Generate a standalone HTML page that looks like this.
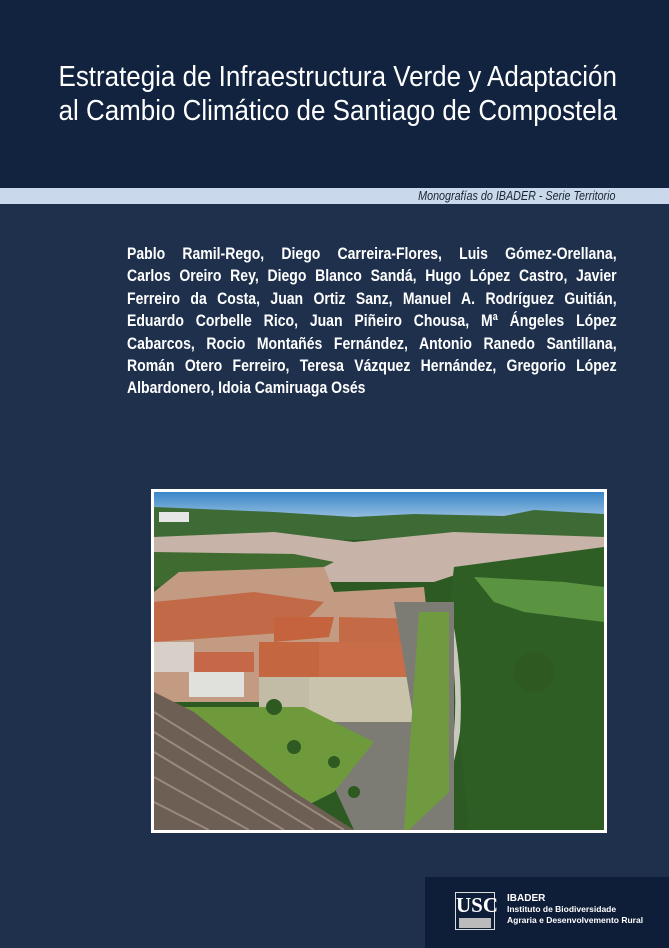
<!DOCTYPE html>
<html><head><meta charset="utf-8"><style>
*{margin:0;padding:0;box-sizing:border-box}
body{width:669px;height:948px;overflow:hidden;background:#1e304c;position:relative;font-family:"Liberation Sans",sans-serif;}
.top{position:absolute;left:0;top:0;width:669px;height:188px;background:#12233f}
.title{position:absolute;right:52px;text-align:right;color:#fff;font-size:29px;line-height:34px;top:60px;white-space:nowrap;transform:scaleX(0.895);transform-origin:right top}
.strip{position:absolute;left:0;top:188px;width:669px;height:16px;background:#c9d8ea}
.strip span{position:absolute;right:54px;top:1px;font-style:italic;font-size:12.5px;color:#1a2436;transform:scaleX(0.86);transform-origin:right top;white-space:nowrap}
.auth{position:absolute;left:127px;top:243px;width:576px;color:#fff;font-size:16.5px;line-height:22.4px;font-weight:bold;transform:scaleX(0.85);transform-origin:left top}
.auth div{text-align:justify;text-align-last:justify;white-space:nowrap}
.auth div.l{text-align-last:left}
.photo{position:absolute;left:151px;top:489px;width:456px;height:344px;background:#fff;padding:3px}
.foot{position:absolute;left:425px;top:877px;width:244px;height:71px;background:#0f1e38}
</style></head><body>
<div class="top"></div>
<div class="title"><div>Estrategia de Infraestructura Verde y Adaptación</div><div>al Cambio Climático de Santiago de Compostela</div></div>
<div class="strip"><span>Monografías do IBADER - Serie Territorio</span></div>
<div class="auth">
<div>Pablo Ramil-Rego, Diego Carreira-Flores, Luis Gómez-Orellana,</div>
<div>Carlos Oreiro Rey, Diego Blanco Sandá, Hugo López Castro, Javier</div>
<div>Ferreiro da Costa, Juan Ortiz Sanz, Manuel A. Rodríguez Guitián,</div>
<div>Eduardo Corbelle Rico, Juan Piñeiro Chousa, Mª Ángeles López</div>
<div>Cabarcos, Rocio Montañés Fernández, Antonio Ranedo Santillana,</div>
<div>Román Otero Ferreiro, Teresa Vázquez Hernández, Gregorio López</div>
<div class="l">Albardonero, Idoia Camiruaga Osés</div>
</div>
<div class="photo">
<svg width="450" height="338" viewBox="0 0 450 338" style="display:block">
<defs><linearGradient id="sk" x1="0" y1="0" x2="0" y2="1"><stop offset="0" stop-color="#3a86c8"/><stop offset="1" stop-color="#9cc3e3"/></linearGradient></defs>
<rect width="450" height="338" fill="#2d5a22"/>
<rect width="450" height="28" fill="url(#sk)"/>
<path d="M0 15 L120 20 L200 25 L260 22 L350 24 L380 18 L450 22 L450 45 L0 50Z" fill="#3e6b35"/>
<rect x="5" y="20" width="30" height="10" fill="#e6e6e6"/>
<path d="M0 45 L120 40 L200 50 L300 40 L450 45 L450 65 L340 70 L280 90 L0 90Z" fill="#c7b3a8"/>
<path d="M0 60 L140 62 L180 70 L160 80 L0 95Z" fill="#3f6a30"/>
<path d="M25 80 L170 75 L180 100 L270 95 L275 140 L260 230 L150 230 L120 210 L0 210 L0 100Z" fill="#c39a82"/>
<path d="M0 110 L100 100 L170 110 L140 140 L0 150Z" fill="#c26a48"/>
<path d="M120 125 L180 125 L175 145 L120 150Z" fill="#c4633e"/>
<path d="M185 125 L265 127 L262 150 L185 150Z" fill="#c46a46"/>
<path d="M150 150 L262 150 L258 190 L150 185Z" fill="#c86d48"/>
<rect x="150" y="185" width="110" height="45" fill="#c9c3ab"/>
<rect x="105" y="150" width="60" height="35" fill="#c4663f"/>
<rect x="105" y="185" width="50" height="45" fill="#c2bba5"/>
<rect x="35" y="160" width="65" height="20" fill="#c46847"/>
<rect x="35" y="180" width="55" height="25" fill="#e0e0dc"/>
<rect x="0" y="150" width="40" height="30" fill="#d8d0c8"/>
<path d="M300 75 L450 55 L450 338 L315 338 L295 120Z" fill="#2f5e24"/>
<path d="M320 85 L410 90 L450 95 L450 130 L370 120 L340 110Z" fill="#5a9440"/>
<path d="M290 115 Q305 180 300 240 Q290 300 270 320 L276 322 Q296 300 306 240 Q310 180 296 115Z" fill="#c8c8bd"/>
<path d="M240 110 L300 110 L300 338 L200 338 L150 230 L260 230Z" fill="#7c7c74"/>
<path d="M265 120 L295 120 L295 300 L255 338 L250 338 Z" fill="#6f9a40"/>
<path d="M30 215 L150 215 L220 250 L180 300 L140 320 L100 310 L40 250Z" fill="#6f9a3c"/>
<path d="M0 200 L40 220 L140 300 L200 338 L0 338Z" fill="#6e5f55"/>
<g stroke="#9a8a7e" stroke-width="2">
<path d="M0 220 L190 338"/><path d="M0 240 L160 338"/><path d="M0 260 L130 338"/><path d="M0 285 L95 338"/><path d="M0 310 L55 338"/>
</g>
<g fill="#2e5a22"><circle cx="120" cy="215" r="8"/><circle cx="140" cy="255" r="7"/><circle cx="180" cy="270" r="6"/><circle cx="200" cy="300" r="6"/><circle cx="380" cy="180" r="20"/></g>
</svg>
</div>
<div class="foot">
<div style="position:absolute;left:30px;top:15px;width:40px;height:38px;border:1px solid #ddd;color:#fff;font-family:'Liberation Serif',serif;font-size:21px;font-weight:bold;text-align:center;line-height:24px">USC<div style="height:10px;background:#bbb;margin:1px 3px"></div></div>
<div style="position:absolute;left:82px;top:16px;color:#fff;font-family:'Liberation Sans',sans-serif;font-size:10px;font-weight:bold;line-height:11px">IBADER<br><span style="font-size:8.5px">Instituto de Biodiversidade<br>Agraria e Desenvolvemento Rural</span></div>
</div>
</body></html>
